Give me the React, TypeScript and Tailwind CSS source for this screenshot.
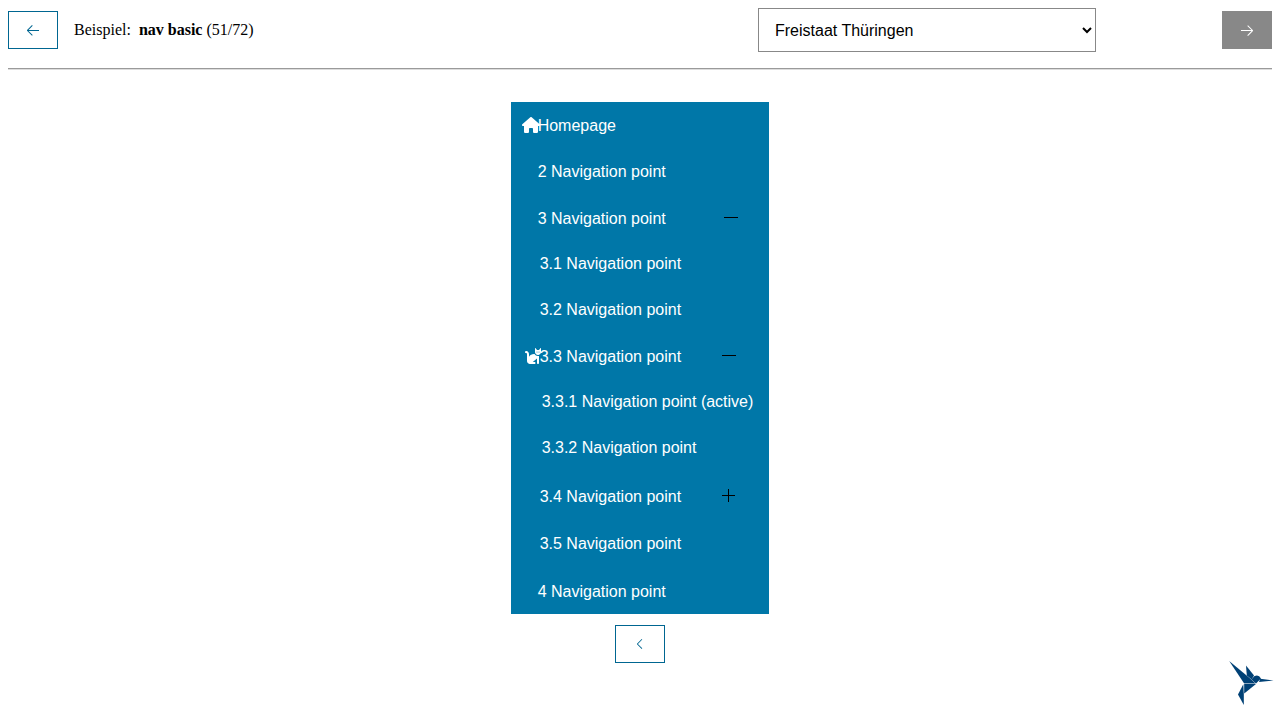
import { useState } from "react";
import type { ReactNode } from "react";
import { VscArrowLeft, VscArrowRight, VscChevronLeft } from "react-icons/vsc";
import { FaCat, FaHouse } from "react-icons/fa6";

type Item = {
  label: string;
  icon?: ReactNode;
  open?: boolean;
  active?: boolean;
  children?: Item[];
};

const items: Item[] = [
  { label: "Homepage", icon: <FaHouse className="h-4 w-[18px]" /> },
  { label: "2 Navigation point" },
  {
    label: "3 Navigation point",
    open: true,
    children: [
      { label: "3.1 Navigation point" },
      { label: "3.2 Navigation point" },
      {
        label: "3.3 Navigation point",
        icon: <FaCat className="h-4 w-[18px]" />,
        open: true,
        children: [
          { label: "3.3.1 Navigation point (active)", active: true },
          { label: "3.3.2 Navigation point" },
        ],
      },
      { label: "3.4 Navigation point", open: false, children: [] },
      { label: "3.5 Navigation point" },
    ],
  },
  { label: "4 Navigation point" },
];

function ToggleIcon({ open }: { open: boolean }) {
  return (
    <svg
      viewBox="0 0 14 14"
      className="size-3.5"
      fill="currentColor"
      shapeRendering="crispEdges"
      aria-hidden="true"
    >
      {open ? (
        <rect x="0" y="7" width="14" height="1" />
      ) : (
        <>
          <rect x="0" y="6" width="13" height="1" />
          <rect x="6" y="0" width="1" height="13" />
        </>
      )}
    </svg>
  );
}

function NavItem({ item }: { item: Item }) {
  const [open, setOpen] = useState(item.open ?? false);
  const expandable = item.children !== undefined;
  const rowHeight = expandable && !open ? "h-12" : "h-[46px]";
  return (
    <li>
      <div className={`flex items-center justify-between ${rowHeight}`}>
        <a
          href="#"
          aria-current={item.active ? "page" : undefined}
          className={`relative flex items-center whitespace-nowrap pr-3 pl-[27px] ${open ? "pt-0.5" : ""}`}
        >
          {item.icon && <span className="absolute left-[11px]">{item.icon}</span>}
          <span className="pt-0.5">{item.label}</span>
        </a>
        {expandable && (
          <button
            type="button"
            aria-label={item.label}
            aria-expanded={open}
            onClick={() => setOpen(!open)}
            className="mr-[31px] text-black"
          >
            <ToggleIcon open={open} />
          </button>
        )}
      </div>
      {open && expandable && <NavList items={item.children ?? []} nested />}
    </li>
  );
}

function NavList({ items, nested }: { items: Item[]; nested?: boolean }) {
  return (
    <ul className={nested ? "px-0.5 pb-0.5" : ""}>
      {items.map((item) => (
        <NavItem key={item.label} item={item} />
      ))}
    </ul>
  );
}

function Hummingbird() {
  return (
    <svg viewBox="0 0 60 60" className="size-15" fill="#004176" aria-hidden="true">
      <path d="M9.2 6 29 22.5 35.6 28.6 24 28.2Z" />
      <path d="M26 10.6 34 20.6 31.6 24.4 26.8 20.4Z" />
      <path d="M31.4 24.6 34.2 21.2Q38.5 18.8 41 23.4L36 28.6Z" />
      <path d="M40.2 23.8 53.5 25.5 39 27Z" />
      <path d="M24.2 28.7 36 29 24.2 38.6Z" />
      <path d="M23.3 29.2 23.8 39 23.8 50 18 39.6Z" />
    </svg>
  );
}

const outlined =
  "flex h-[38px] w-[50px] items-center justify-center border border-[#006691] bg-white text-[#006691]";

export default function App() {
  return (
    <div className="flex min-h-screen flex-col bg-white p-2 font-['Liberation_Serif',serif] text-base text-black">
      <header className="flex items-center">
        <div className="flex flex-1 items-center gap-4">
          <button type="button" aria-label="Zurück" className={outlined}>
            <VscArrowLeft size={16} />
          </button>
          <p className="flex gap-2">
            <span>Beispiel:</span>
            <span>
              <strong>nav basic</strong> (51/72)
            </span>
          </p>
        </div>
        <select
          aria-label="Theme"
          className="h-11 w-[338px] border border-[#888888] bg-white pl-3 font-['Liberation_Sans',sans-serif]"
        >
          <option>Freistaat Thüringen</option>
        </select>
        <div className="flex w-44 justify-end">
          <button
            type="button"
            aria-label="Weiter"
            className="flex h-[38px] w-[50px] items-center justify-center bg-[#888888] text-white"
          >
            <VscArrowRight size={16} />
          </button>
        </div>
      </header>
      <hr className="mt-4 border-t border-b border-t-[#9a9a9a] border-b-[#dddddd]" />
      <main className="mt-8 flex flex-col items-center gap-[11px]">
        <nav
          aria-label="Navigation"
          className="w-fit bg-[#0077a8] font-['Liberation_Sans',sans-serif] text-white"
        >
          <NavList items={items} />
        </nav>
        <button type="button" aria-label="Navigation minimieren" className={outlined}>
          <VscChevronLeft size={16} />
        </button>
      </main>
      <div className="fixed right-0 bottom-[5px]">
        <Hummingbird />
      </div>
    </div>
  );
}
